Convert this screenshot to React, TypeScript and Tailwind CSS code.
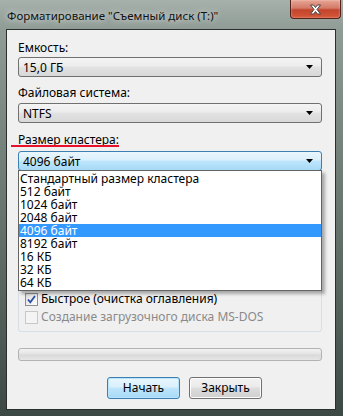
import React from 'react';

const sizes = [
  'Стандартный размер кластера',
  '512 байт',
  '1024 байт',
  '2048 байт',
  '4096 байт',
  '8192 байт',
  '16 КБ',
  '32 КБ',
  '64 КБ',
];

const Arrow = () => (
  <svg width="7" height="4" viewBox="0 0 7 4">
    <path d="M0 0h7L3.5 4z" fill="#000" />
  </svg>
);

const Combo = ({ value, focused }: { value: string; focused?: boolean }) => (
  <div
    className={`flex h-[20px] items-center justify-between rounded-[3px] border pl-[4px] pr-[8px] ${
      focused
        ? 'border-[#3c7fb1] bg-[linear-gradient(#eaf6fd_0%,#d9f0fc_45%,#bee6fd_50%,#a7d9f5_100%)]'
        : 'border-[#707070] bg-[linear-gradient(#f4f4f4_0%,#ececec_45%,#e2e2e2_50%,#d8d8d8_100%)]'
    }`}
  >
    <span className="leading-[15px]">{value}</span>
    <Arrow />
  </div>
);

const Check = ({ checked, disabled, label }: { checked?: boolean; disabled?: boolean; label: string }) => (
  <div className="flex h-[18px] items-center gap-[3px]">
    <div
      className={`flex h-[13px] w-[13px] items-center justify-center border ${
        disabled
          ? 'border-[#c8c8c8] bg-[#f4f4f4]'
          : 'border-[#8e8f8f] bg-[linear-gradient(135deg,#dcdcdc,#ffffff)]'
      }`}
    >
      {checked && (
        <svg width="9" height="9" viewBox="0 0 9 9">
          <path d="M1 4.5l2.3 2.8L8 1" stroke="#2a4ea8" strokeWidth="1.8" fill="none" />
        </svg>
      )}
    </div>
    <span className={disabled ? 'text-[#8a8a8a]' : 'text-black'}>{label}</span>
  </div>
);

export default function App() {
  return (
    <div className="relative h-[416px] w-[343px] overflow-hidden bg-[linear-gradient(180deg,#a7b1ac_0px,#909c96_28px,#7b8882_120px,#56625c_300px,#3c4843_416px)] font-['Noto_Sans',sans-serif] text-[12px] text-black">
      {/* title bar */}
      <div className="flex h-[29px] items-center pl-[7px] pt-[2px] text-[11.5px] text-[#111] [text-shadow:0_0_6px_rgba(255,255,255,0.9)]">
        Форматирование "Съемный диск (T:)"
      </div>
      <div className="absolute left-[290px] top-0 flex h-[19px] w-[51px] items-center justify-center rounded-b-[4px] border border-t-0 border-[#54201a] bg-[linear-gradient(#e8a493_0%,#d27a68_45%,#c2442c_55%,#d5583a_100%)] shadow-[inset_0_0_2px_rgba(255,255,255,0.6)]">
        <svg width="13" height="11" viewBox="0 0 13 11">
          <path
            d="M1.5 1h3l2 2.5L8.5 1h3L8 5.5l3.5 4.5h-3l-2-2.5-2 2.5h-3L5 5.5z"
            fill="#fff"
            stroke="#3a3a3a"
            strokeWidth="0.9"
          />
        </svg>
      </div>

      {/* client area */}
      <div className="ml-[6px] h-[381px] w-[330px] border border-[#2a302d] bg-[#f0f0f0] pl-[11px] pr-[13px]">
        <div className="mt-[10px] leading-[15px]">Емкость:</div>
        <div className="mt-[2px]">
          <Combo value="15,0 ГБ" />
        </div>
        <div className="mt-[8px] leading-[15px]">Файловая система:</div>
        <div className="mt-[3px]">
          <Combo value="NTFS" />
        </div>
        <div className="relative mt-[9px] leading-[15px]">
          Размер кластера:
          <div className="absolute left-[-7px] top-[13px] h-[2px] w-[108px] bg-[#e8102a]" />
        </div>
        <div className="relative mt-[4px]">
          <Combo value="4096 байт" focused />
          <div className="absolute left-0 top-[19px] z-10 h-[121px] w-[304px] border border-[#646464] bg-white pt-[1px] shadow-[3px_3px_3px_rgba(0,0,0,0.3)]">
            {sizes.map((s) => (
              <div
                key={s}
                className={`h-[13px] pl-[1px] leading-[13px] ${s === '4096 байт' ? 'bg-[#3399ff] text-white' : ''}`}
              >
                {s}
              </div>
            ))}
          </div>
        </div>

        {/* controls hidden behind the open list */}
        <div className="mt-[8px] h-[23px] rounded-[3px] border border-[#707070]" />
        <div className="mt-[23px] h-[21px] border border-[#abadb3] bg-white" />

        <div className="mt-[8px] h-[78px] rounded-[3px] border border-[#d5dfe5] pl-[6px] pt-[35px]">
          <Check checked label="Быстрое (очистка оглавления)" />
          <Check disabled label="Создание загрузочного диска MS-DOS" />
        </div>

        <div className="mt-[16px] h-[13px] rounded-[3px] border border-[#b2b2b2] bg-[linear-gradient(#f3f3f3_0%,#e4e4e4_45%,#d9d9d9_55%,#e6e6e6_100%)]" />

        <div className="mt-[16px] flex gap-[9px] pl-[89px]">
          <div className="flex h-[22px] w-[73px] items-center justify-center rounded-[3px] border border-[#3c7fb1] bg-[linear-gradient(#eaf6fd_0%,#d9f0fc_45%,#bee6fd_50%,#a7d9f5_100%)] shadow-[inset_0_0_0_1px_#b7e4fb]">
            Начать
          </div>
          <div className="flex h-[22px] w-[73px] items-center justify-center rounded-[3px] border border-[#707070] bg-[linear-gradient(#f2f2f2_0%,#ebebeb_45%,#dddddd_50%,#cfcfcf_100%)] shadow-[inset_0_0_0_1px_#fcfcfc]">
            Закрыть
          </div>
        </div>
      </div>
    </div>
  );
}
